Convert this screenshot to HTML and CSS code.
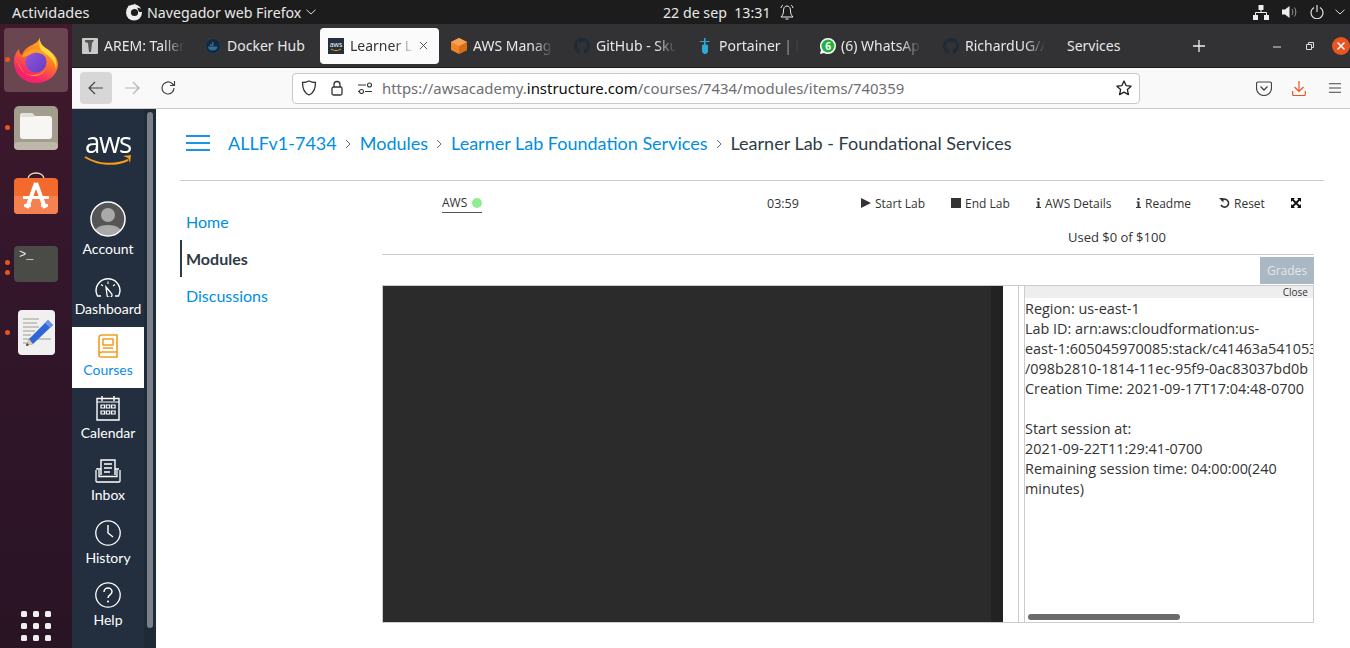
FILE: index.html
```html
<!DOCTYPE html>
<html lang="es">
<head>
<meta charset="utf-8">
<title>Learner Lab - Foundational Services</title>
<link rel="stylesheet" href="styles.css">
</head>
<body>
<header class="topbar">
  <span class="activities">Actividades</span>
  <svg class="top-fx" viewBox="0 0 18 18"><circle cx="9" cy="9.500" r="8" fill="#eee"/><circle cx="9.500" cy="9.500" r="3.600" fill="#1c1c1c"/><path d="M1.500 7 4 2 6 5l4-4.500 1.500 4L8 6 4.500 8z" fill="#eee"/><path d="M12 4.500 17 6v3h-3z" fill="#1c1c1c"/></svg>
  <span class="app-name">Navegador web Firefox</span>
  <svg class="chev" viewBox="0 0 10 6"><path d="M.5.8 5 5 9.500.8" fill="none" stroke="#ddd" stroke-width="1"/></svg>
  <span class="clock">22 de sep &nbsp;13:31</span>
  <svg class="bell" viewBox="0 0 14 16"><path d="M7 2C4.200 2 3.500 4.500 3.500 7c0 2.500-1 4.500-2.500 6h12c-1.500-1.500-2.500-3.500-2.500-6 0-2.500-.7-5-3.500-5zM5.500 15h3M1 4c.3-1.500 1-2.500 2-3M13 4c-.3-1.500-1-2.500-2-3" fill="none" stroke="#eee" stroke-width="1"/></svg>
  <div class="tray">
    <svg class="tray-net" viewBox="0 0 16 15"><path d="M5.500 0h5v5h-5zM0 10h5v5H0zM11 10h5v5h-5z" fill="#eee"/><path d="M8 5v2.500M2.500 10V7.500h11V10" fill="none" stroke="#eee"/></svg>
    <svg class="tray-vol" viewBox="0 0 15 14"><path d="M0 4.500h3L7.500 1v12L3 9.500H0z" fill="#eee"/><path d="M10 4c1 1.800 1 4.200 0 6M12.500 2.500c1.800 2.800 1.800 6.200 0 9" fill="none" stroke="#999"/></svg>
    <svg class="tray-pow" viewBox="0 0 14 14"><path d="M4 2.500a6 6 0 1 0 6 0M7 0v7" fill="none" stroke="#eee" stroke-width="1.100"/></svg>
    <svg class="chev tray-chev" viewBox="0 0 10 6"><path d="M.5.8 5 5 9.500.8" fill="none" stroke="#ddd" stroke-width="1"/></svg>
  </div>
</header>

<div class="desktop">
  <aside class="dock">
    <div class="dock-tile dock-firefox">
      <i class="run-dot"></i>
      <svg class="i-firefox" viewBox="0 0 44 46">
        <defs>
          <linearGradient id="fxa" x1="0.8" y1="0" x2="0.3" y2="1"><stop offset="0" stop-color="#ffc31f"/><stop offset=".45" stop-color="#ff7a25"/><stop offset=".85" stop-color="#f5226e"/></linearGradient>
          <linearGradient id="fxb" x1="0" y1="0" x2="1" y2="1"><stop offset="0" stop-color="#9a55d8"/><stop offset="1" stop-color="#5b3fc7"/></linearGradient>
        </defs>
        <path d="M26 0c-1 5 2 9 7 12 6 4 11 9 11 15 0 11-10 19-22 19C10 46 0 37 0 25c0-6 2-10 5-13 0 3 1 5 3 6 1-4 4-7 8-9 4-2 9-4 10-9z" fill="url(#fxa)"/>
        <path d="M26 0c-1 5 2 9 7 12 6 4 11 10 9 20-1-8-7-15-14-16-3-5-3-11-2-16z" fill="#ffd83b"/>
        <circle cx="22" cy="25" r="10.500" fill="url(#fxb)"/>
        <path d="M8 20c2-6 10-10 18-7 3 1 6 3 7 7-4-3-9-5-13-4-4 1-7 4-12 4z" fill="#ff9c24"/>
        <path d="M4 24c1 7 5 14 15 14 8 0 13-5 14-9-2 7-8 11-15 10C10 38 6 31 4 24z" fill="#ff9a2e"/>
      </svg>
    </div>
    <div class="dock-item dock-files">
      <i class="run-dot"></i>
      <svg class="i-files" viewBox="0 0 44 44"><rect width="44" height="44" rx="5" fill="#a39d8d"/><rect y="36" width="44" height="8" rx="4" fill="#bdb8aa"/><path d="M6 10a3 3 0 0 1 3-3h9l3 3h14a3 3 0 0 1 3 3v17a3 3 0 0 1-3 3H9a3 3 0 0 1-3-3z" fill="#f7f6f3"/><path d="M6 11h15l-3-4H9a3 3 0 0 0-3 3z" fill="#e2e0da"/></svg>
    </div>
    <div class="dock-item dock-store">
      <svg class="i-store" viewBox="0 0 44 44"><path d="M14 7c0-8 16-8 16 0" fill="none" stroke="#f3d9bd" stroke-width="1.500"/><rect y="6" width="44" height="36" rx="4" fill="#f26a2e"/><path d="M0 24h44v14a4 4 0 0 1-4 4H4a4 4 0 0 1-4-4z" fill="#f68150"/><path d="M22 11 13 36M22 11l9 25" stroke="#fff" stroke-width="4" fill="none"/><path d="M9 24h26v3H9zM10 32h7v3h-7zM27 32h7v3h-7z" fill="#fff"/></svg>
    </div>
    <div class="dock-item dock-term">
      <i class="run-dot dot-a"></i><i class="run-dot dot-b"></i>
      <div class="term-tile">&gt;_</div>
    </div>
    <div class="dock-item dock-edit">
      <i class="run-dot"></i>
      <svg class="i-edit" viewBox="0 0 37 45"><rect width="37" height="45" rx="4" fill="#f0f0f0"/><path d="M5 9h16M5 13h14M5 17h16M5 21h12M5 25h8M5 29h28M5 33h10" stroke="#bbb7ad" stroke-width="1.300"/><path d="m30 10 5 5-20 19-7 2 3-7z" fill="#2f66d8"/><path d="m30 10 5 5-3 3-5-5z" fill="#6c93e8"/><path d="m11 29 4 5-7 2z" fill="#e5c9a0"/><path d="m9 33 2 2-3 1z" fill="#333"/></svg>
    </div>
    <div class="apps-grid"><i></i><i></i><i></i><i></i><i></i><i></i><i></i><i></i><i></i></div>
  </aside>

  <section class="browser">
    <div class="tabbar">
      <div class="tab">
        <svg class="fav" viewBox="0 0 16 16"><rect width="16" height="16" rx="1" fill="#c9c9c9"/><path d="M3 2h9l-2 3-1 9H7L6 5 3 4z" fill="#555"/></svg>
        <span class="tab-title fade">AREM: Taller de</span>
      </div>
      <div class="tab">
        <svg class="fav" viewBox="0 0 16 16"><circle cx="8" cy="8" r="7.500" fill="#16293a" stroke="#1e3f5c"/><path d="M3 8.500h9.500c0 2.500-2 4-5 4-2.500 0-4.500-1.500-4.500-4zM5 6h1.500v2H5zM7 6h1.500v2H7zM7 4h1.500v2H7z" fill="#2f6d9e"/></svg>
        <span class="tab-title">Docker Hub</span>
      </div>
      <div class="tab tab-active">
        <svg class="fav" viewBox="0 0 16 16"><rect width="16" height="16" fill="#232f3e"/><path d="M3 11c3 2 7 2 10 0" stroke="#f90" fill="none"/><text x="8" y="9" font-size="7" fill="#fff" text-anchor="middle" font-family="Open Sans">aws</text></svg>
        <span class="tab-title fade-short">Learner Lab</span>
        <svg class="tab-x" viewBox="0 0 10 10"><path d="m1 1 8 8M9 1 1 9" stroke="#444" stroke-width="1"/></svg>
      </div>
      <div class="tab">
        <svg class="fav" viewBox="0 0 16 16"><path d="M8 0l8 4v8l-8 4-8-4V4z" fill="#ed8427"/><path d="M8 8l8-4v8l-8 4z" fill="#d96d17"/><path d="M0 4l8-4 8 4-8 4z" fill="#f7a154"/></svg>
        <span class="tab-title fade">AWS Management</span>
      </div>
      <div class="tab">
        <svg class="fav" viewBox="0 0 16 16"><path fill="#1f2a36" d="M8 0C3.580 0 0 3.580 0 8c0 3.540 2.290 6.530 5.470 7.590.4.070.55-.17.55-.38 0-.19-.01-.82-.01-1.490-2.010.37-2.530-.49-2.690-.94-.09-.23-.48-.94-.82-1.130-.28-.15-.68-.52-.01-.53.63-.01 1.080.58 1.230.82.72 1.210 1.870.87 2.330.66.07-.52.28-.87.51-1.070-1.780-.2-3.640-.89-3.640-3.950 0-.87.31-1.590.82-2.150-.08-.2-.36-1.020.08-2.120 0 0 .67-.21 2.200.82.64-.18 1.320-.27 2-.27.68 0 1.360.09 2 .27 1.530-1.040 2.200-.82 2.200-.82.44 1.100.16 1.920.08 2.120.51.56.82 1.270.82 2.150 0 3.070-1.870 3.750-3.650 3.950.29.25.54.73.54 1.480 0 1.070-.01 1.930-.01 2.200 0 .21.15.46.55.38A8.013 8.013 0 0 0 16 8c0-4.420-3.580-8-8-8z"/></svg>
        <span class="tab-title fade">GitHub - Skuller</span>
      </div>
      <div class="tab">
        <svg class="fav" viewBox="0 0 16 16"><path d="M7 0h1.500v3H13l-1 1H8.500v2.500H10V7h1v7l-2 2H7l-2-2V7h1v-.5h1V4H3.500l-1-1H7z" fill="#2ea9d6"/></svg>
        <span class="tab-title fade">Portainer | local</span>
      </div>
      <div class="tab">
        <svg class="fav" viewBox="0 0 16 16"><path d="M8 0a8 8 0 0 1 0 16c-1.500 0-3-.4-4-1l-4 1 1-4C.4 11 0 9.500 0 8a8 8 0 0 1 8-8z" fill="#fff"/><circle cx="8" cy="8" r="6.500" fill="#21b33e"/><text x="8" y="11.500" font-size="10" font-weight="700" fill="#fff" text-anchor="middle" font-family="Open Sans">6</text></svg>
        <span class="tab-title tab-wa fade">(6) WhatsApp</span>
      </div>
      <div class="tab">
        <svg class="fav" viewBox="0 0 16 16"><path fill="#1f2a36" d="M8 0C3.580 0 0 3.580 0 8c0 3.540 2.290 6.530 5.470 7.590.4.070.55-.17.55-.38 0-.19-.01-.82-.01-1.490-2.010.37-2.530-.49-2.690-.94-.09-.23-.48-.94-.82-1.130-.28-.15-.68-.52-.01-.53.63-.01 1.080.58 1.230.82.72 1.210 1.870.87 2.330.66.07-.52.28-.87.51-1.070-1.780-.2-3.640-.89-3.640-3.950 0-.87.31-1.590.82-2.150-.08-.2-.36-1.020.08-2.120 0 0 .67-.21 2.200.82.64-.18 1.320-.27 2-.27.68 0 1.360.09 2 .27 1.530-1.040 2.200-.82 2.200-.82.44 1.100.16 1.920.08 2.120.51.56.82 1.270.82 2.150 0 3.070-1.870 3.750-3.650 3.950.29.25.54.73.54 1.480 0 1.070-.01 1.930-.01 2.200 0 .21.15.46.55.38A8.013 8.013 0 0 0 16 8c0-4.420-3.580-8-8-8z"/></svg>
        <span class="tab-title fade">RichardUG/ARE</span>
      </div>
      <div class="tab tab-plain"><span class="tab-title">Services</span></div>
      <svg class="newtab" viewBox="0 0 12 12"><path d="M6 0v12M0 6h12" stroke="#eee" stroke-width="1.300"/></svg>
      <div class="winctl">
        <svg class="win-min" viewBox="0 0 8 2"><path d="M0 1h8" stroke="#ddd" stroke-width="1"/></svg>
        <svg class="win-max" viewBox="0 0 8 8"><path d="M.5 2.500h5v5h-5zM2.500 2V.5h5v5H6" fill="none" stroke="#ddd"/></svg>
        <svg class="win-close" viewBox="0 0 18 18"><circle cx="9" cy="9" r="9" fill="#e95420"/><path d="m5.500 5.500 7 7M12.500 5.500l-7 7" stroke="#fff" stroke-width="1.500"/></svg>
      </div>
    </div>

    <div class="navbar">
      <button class="nav-back"><svg viewBox="0 0 16 14"><path d="M15 7H1M7 1 1 7l6 6" fill="none" stroke="#444" stroke-width="1.200"/></svg></button>
      <svg class="nav-fwd" viewBox="0 0 16 14"><path d="M1 7h14M9 1l6 6-6 6" fill="none" stroke="#b5b5b5" stroke-width="1.200"/></svg>
      <svg class="nav-reload" viewBox="0 0 16 16"><path d="M14 8a6 6 0 1 1-2-4.500L14 5.500M14.500 1v4.500H10" fill="none" stroke="#444" stroke-width="1.200"/></svg>
      <div class="urlbar">
        <svg class="u-shield" viewBox="0 0 16 16"><path d="M8 1c2 1 4 1.500 6.500 1.500C14.500 9 13 13 8 15 3 13 1.500 9 1.500 2.500 4 2.500 6 2 8 1z" fill="none" stroke="#333" stroke-width="1.300"/></svg>
        <svg class="u-lock" viewBox="0 0 14 16"><path d="M4 7V4.500a3 3 0 0 1 6 0V7" fill="none" stroke="#333" stroke-width="1.300"/><rect x="2" y="7" width="10" height="8" rx="1.500" fill="none" stroke="#333" stroke-width="1.300"/></svg>
        <svg class="u-perm" viewBox="0 0 16 12"><path d="M1 3h8M1 9.500h1M8 9.500h7" stroke="#333" stroke-width="1.200"/><circle cx="12.500" cy="3" r="2" fill="none" stroke="#333" stroke-width="1.100"/><circle cx="4.500" cy="9.500" r="2" fill="none" stroke="#333" stroke-width="1.100"/></svg>
        <span class="url"><span class="url-dim">https://awsacademy.</span><span class="url-host">instructure.com</span><span class="url-dim">/courses/7434/modules/items/740359</span></span>
        <svg class="u-star" viewBox="0 0 16 16"><path d="m8 1 2.100 4.600 5 .6-3.700 3.400 1 5L8 12.100 3.600 14.600l1-5L.9 6.200l5-.6z" fill="none" stroke="#222" stroke-width="1.300" stroke-linejoin="round"/></svg>
      </div>
      <svg class="n-pocket" viewBox="0 0 16 15"><path d="M2 1h12a1.500 1.500 0 0 1 1.500 1.500V7a7.500 7.500 0 0 1-15 0V2.500A1.500 1.500 0 0 1 2 1z" fill="none" stroke="#444" stroke-width="1.200"/><path d="m4.500 5.500 3.500 3.500 3.500-3.500" fill="none" stroke="#444" stroke-width="1.300"/></svg>
      <svg class="n-dl" viewBox="0 0 14 15"><path d="M7 0v10M2.500 6 7 10.500 11.500 6M.7 10v3.500a1 1 0 0 0 1 1h10.600a1 1 0 0 0 1-1V10" fill="none" stroke="#e95420" stroke-width="1.200"/></svg>
      <svg class="n-menu" viewBox="0 0 12 10"><path d="M0 .7h12M0 5h12M0 9.300h12" stroke="#444" stroke-width="1.100"/></svg>
    </div>

    <div class="page">
      <nav class="lms-nav">
        <div class="lms-logo">
          <span class="lms-aws">aws</span>
          <svg class="lms-swoosh" viewBox="0 0 49 12"><path d="M1 2c13 8 30 9 43 3" fill="none" stroke="#f59b1d" stroke-width="2"/><path d="M39 1l8-1-1 8-2-5z" fill="#f59b1d"/></svg>
        </div>
        <a class="lms-item h-account">
          <svg class="ico-account" viewBox="0 0 36 36"><defs><clipPath id="acc"><circle cx="18" cy="18" r="16.500"/></clipPath></defs><circle cx="18" cy="18" r="16.500" fill="#555"/><g clip-path="url(#acc)"><circle cx="18" cy="14" r="7" fill="#a9a9a9"/><path d="M3 36c0-9 7-12 15-12s15 3 15 12z" fill="#a9a9a9"/></g><circle cx="18" cy="18" r="17" fill="none" stroke="#fff" stroke-width="1.500"/></svg>
          <span>Account</span>
        </a>
        <a class="lms-item h-dash">
          <svg class="ico-dash" viewBox="0 0 26 19"><path d="M6 18H2.500C1.500 16 1 14 1 12.800A12 12 0 0 1 25 12.800C25 14 24.500 16 23.500 18H20" fill="none" stroke="#fff" stroke-width="1.400"/><path d="M13 3.500v2.500M6 6.500l2 1.500M20 6.500l-2 1.500" stroke="#fff" stroke-width="1.100"/><path d="m11 9 5 6a2.500 2.500 0 1 1-4 2z" fill="none" stroke="#fff" stroke-width="1.300"/></svg>
          <span>Dashboard</span>
        </a>
        <a class="lms-item lms-active h-courses">
          <svg class="ico-courses" viewBox="0 0 20 24"><path d="M4 1h15v17H4a3 3 0 0 0-3 3V4a3 3 0 0 1 3-3zM1 21a2 2 0 0 0 2 2h16v-5" fill="none" stroke="#f59b1d" stroke-width="1.600"/><path d="M5 5h10v6H5z" fill="none" stroke="#f59b1d" stroke-width="1.500"/><path d="M5 14h10" stroke="#f59b1d" stroke-width="1.500"/></svg>
          <span>Courses</span>
        </a>
        <a class="lms-item h-cal">
          <svg class="ico-cal" viewBox="0 0 24 26"><path d="M1 3.500h22V25H1zM6 1v5M18 1v5" fill="none" stroke="#fff" stroke-width="1.400"/><path d="M1 7h22" stroke="#fff" stroke-width="1"/><path d="M5 10h3.500v3H5zM10.300 10h3.500v3h-3.500zM15.600 10h3.500v3h-3.500zM5 16h3.500v3H5zM10.300 16h3.500v3h-3.500zM15.600 16h3.500v3h-3.500z" fill="none" stroke="#fff" stroke-width="1.200"/></svg>
          <span>Calendar</span>
        </a>
        <a class="lms-item h-inbox">
          <svg class="ico-inbox" viewBox="0 0 26 24"><path d="M6 16V1h14v15" fill="none" stroke="#fff" stroke-width="1.400"/><path d="M9 5h8M9 9h8M9 13h6" stroke="#fff" stroke-width="1.300"/><path d="M6 10H2v-1M20 10h4M1 11v11a1 1 0 0 0 1 1h22a1 1 0 0 0 1-1V11M4 11v6.500h18V11" fill="none" stroke="#fff" stroke-width="1.300"/></svg>
          <span>Inbox</span>
        </a>
        <a class="lms-item h-hist">
          <svg class="ico-round" viewBox="0 0 26 26"><circle cx="13" cy="13" r="12.200" fill="none" stroke="#fff" stroke-width="1.300"/><path d="M13 5v8l5 4" fill="none" stroke="#fff" stroke-width="1.400"/></svg>
          <span>History</span>
        </a>
        <a class="lms-item h-help">
          <svg class="ico-round" viewBox="0 0 26 26"><circle cx="13" cy="13" r="12.200" fill="none" stroke="#fff" stroke-width="1.300"/><path d="M9 10c0-2.500 2-4 4-4s4 1.500 4 3.800c0 3-4 3.200-4 6.200" fill="none" stroke="#fff" stroke-width="1.500"/><circle cx="13" cy="19.500" r="1.100" fill="#fff"/></svg>
          <span>Help</span>
        </a>
      </nav>
      <div class="vscroll"><div class="vthumb"></div></div>

      <main class="content">
        <div class="crumbs">
          <div class="burger"><i></i><i></i><i></i></div>
          <a>ALLFv1-7434</a><svg class="sep" viewBox="0 0 6 10"><path d="m1 1 4 4-4 4" fill="none" stroke="#666"/></svg>
          <a>Modules</a><svg class="sep" viewBox="0 0 6 10"><path d="m1 1 4 4-4 4" fill="none" stroke="#666"/></svg>
          <a>Learner Lab Foundation Services</a><svg class="sep" viewBox="0 0 6 10"><path d="m1 1 4 4-4 4" fill="none" stroke="#666"/></svg>
          <span class="crumb-current">Learner Lab - Foundational Services</span>
        </div>
        <div class="course">
          <ul class="course-nav">
            <li>Home</li>
            <li class="course-active">Modules</li>
            <li>Discussions</li>
          </ul>
          <div class="lab">
            <div class="lab-tools">
              <span class="lab-aws">AWS <i class="led"></i></span>
              <span class="lab-time">03:59</span>
              <span class="tool"><svg class="t-play" viewBox="0 0 10 10"><path d="M0 0l10 5-10 5z" fill="#333"/></svg>Start Lab</span>
              <span class="tool"><i class="t-stop"></i>End Lab</span>
              <span class="tool"><svg class="t-info" viewBox="0 0 5 10"><path d="M1.500 0h2v2h-2zM.5 3.500h3V9H5v1H0V9h1.500V4.500H.5z" fill="#333"/></svg>AWS Details</span>
              <span class="tool"><svg class="t-info" viewBox="0 0 5 10"><path d="M1.500 0h2v2h-2zM.5 3.500h3V9H5v1H0V9h1.500V4.500H.5z" fill="#333"/></svg>Readme</span>
              <span class="tool"><svg class="t-reset" viewBox="0 0 11 10"><path d="M2.500 2.500A4 4 0 1 1 2 7" fill="none" stroke="#333" stroke-width="1.600"/><path d="M0 0h4.500v4.500z" fill="#333"/></svg>Reset</span>
              <svg class="t-expand" viewBox="0 0 10 10"><path d="M0 0h4L0 4zM10 0v4L6 0zM0 10V6l4 4zM10 10H6l4-4z" fill="#111"/><path d="m1.500 1.500 7 7M8.500 1.500l-7 7" stroke="#111" stroke-width="1.800"/></svg>
            </div>
            <div class="lab-used">Used $0 of $100</div>
            <div class="lab-grades"><span class="grades-btn">Grades</span></div>
            <div class="lab-box">
              <div class="term"><div class="term-scroll"></div></div>
              <div class="gutter"></div>
              <div class="panel">
                <div class="panel-head">Close</div>
                <div class="panel-body">Region: us-east-1<br>Lab ID: arn:aws:cloudformation:us-<br>east-1:605045970085:stack/c41463a541053<br>/098b2810-1814-11ec-95f9-0ac83037bd0b<br>Creation Time: 2021-09-17T17:04:48-0700<br><br>Start session at:<br>2021-09-22T11:29:41-0700<br>Remaining session time: 04:00:00(240<br>minutes)</div>
                <div class="panel-hbar"></div>
              </div>
            </div>
          </div>
        </div>
      </main>
    </div>
  </section>
</div>
</body>
</html>
```
FILE: styles.css
```css
* { box-sizing: border-box; }
html, body { margin: 0; height: 648px; overflow: hidden; background: #fff; }
body { display: flex; flex-direction: column; width: 1350px; font-family: "Noto Sans", sans-serif; }
svg { display: block; flex: none; }
i { display: block; }

/* top bar */
.topbar { height: 24px; flex: none; background: #1c1c1c; color: #e8e8e8; display: flex; align-items: center; font-size: 14px; }
.activities { margin-left: 12px; width: 113px; font-size: 14.500px; }
.top-fx { width: 18px; height: 18px; }
.app-name { margin-left: 4px; width: 155px; white-space: nowrap; font-size: 14.200px; }
.chev { width: 10px; height: 6px; margin-left: 4px; }
.clock { margin-left: 347px; width: 117px; white-space: nowrap; font-size: 14.200px; }
.bell { width: 14px; height: 16px; }
.tray { margin-left: auto; display: flex; align-items: center; padding-right: 5px; }
.tray-net { width: 16px; height: 15px; }
.tray-vol { width: 15px; height: 14px; margin-left: 13px; }
.tray-pow { width: 14px; height: 14px; margin-left: 13px; }
.tray-chev { margin-left: 11px; }

.desktop { flex: 1; display: flex; min-height: 0; }

/* dock */
.dock { width: 72px; flex: none; position: relative; background: linear-gradient(180deg, #41192c 0%, #33162a 40%, #291424 100%); padding-top: 4px; display: flex; flex-direction: column; align-items: center; }
.dock-tile { width: 64px; height: 64px; border-radius: 4px; background: #6a4650; display: flex; justify-content: center; align-items: center; position: relative; }
.i-firefox { width: 44px; height: 46px; }
.dock-item { position: relative; width: 72px; display: flex; justify-content: center; }
.run-dot { position: absolute; width: 5px; height: 5px; border-radius: 50%; background: #e95420; left: 5px; top: 50%; margin-top: -3px; }
.dock-tile .run-dot { left: 1px; }
.dock-files { margin-top: 14px; }
.i-files { width: 44px; height: 44px; }
.dock-store { margin-top: 22px; }
.i-store { width: 44px; height: 44px; }
.dock-term { margin-top: 30px; }
.dot-a { top: 14px; margin-top: 0; }
.dot-b { top: 24px; margin-top: 0; }
.term-tile { width: 44px; height: 36px; background: #4a4a47; border-radius: 4px; color: #eee; font: 12px/14px "Liberation Mono", monospace; padding: 2px 5px; }
.dock-edit { margin-top: 28px; }
.i-edit { width: 37px; height: 45px; }
.apps-grid { position: absolute; left: 21px; bottom: 7px; display: grid; grid-template-columns: repeat(3, 6px); gap: 6px; }
.apps-grid i { width: 6px; height: 6px; border-radius: 1.500px; background: #efefef; }

/* browser */
.browser { flex: 1; min-width: 0; display: flex; flex-direction: column; }
.tabbar { height: 44px; flex: none; background: #323234; display: flex; align-items: center; padding-left: 2px; border-bottom: 1px solid #1a1a1a; }
.tab { width: 119px; height: 36px; margin-right: 4px; padding-left: 8px; display: flex; align-items: center; flex: none; color: #e8e8e8; font-size: 14px; border-radius: 4px; position: relative; }
.fav { width: 16px; height: 16px; margin-right: 6px; }
.tab-title { display: block; width: 80px; overflow: hidden; white-space: nowrap; }
.fade { -webkit-mask-image: linear-gradient(90deg, #000 75%, transparent 100%); mask-image: linear-gradient(90deg, #000 75%, transparent 100%); }
.fade-short { width: 64px; -webkit-mask-image: linear-gradient(90deg, #000 70%, transparent 100%); mask-image: linear-gradient(90deg, #000 70%, transparent 100%); }
.tab-wa { margin-left: -1px; }
.tab-active { background: #fbfbfb; color: #333; }
.tab-x { width: 9px; height: 9px; margin-left: 5px; }
.tab-plain { padding-left: 9px; width: 80px; margin-right: 0; }
.newtab { width: 12px; height: 12px; margin-left: 55px; }
.winctl { margin-left: auto; display: flex; align-items: center; }
.win-min { width: 8px; height: 2px; margin-top: 3px; }
.win-max { width: 8px; height: 8px; margin-left: 25px; }
.win-close { width: 18px; height: 18px; margin-left: 18px; }

/* navbar */
.navbar { height: 41px; flex: none; background: #f9f9fa; border-bottom: 1px solid #ccc; display: flex; align-items: center; padding-left: 8px; }
.nav-back { width: 32px; height: 32px; border: 0; padding: 0 0 0 8px; background: #d7d7d8; border-radius: 4px; }
.nav-back svg { width: 16px; height: 14px; }
.nav-fwd { width: 16px; height: 14px; margin-left: 12px; }
.nav-reload { width: 16px; height: 16px; margin-left: 20px; }
.urlbar { width: 848px; height: 31px; margin-left: 116px; background: #fff; border: 1px solid #c8c8c8; border-radius: 4px; display: flex; align-items: center; padding-left: 8px; }
.u-shield { width: 16px; height: 16px; }
.u-lock { width: 14px; height: 16px; margin-left: 13px; }
.u-perm { width: 16px; height: 12px; margin-left: 13px; }
.url { margin-left: 9px; font-size: 14.900px; white-space: nowrap; }
.url-dim { color: #6e6e72; }
.url-host { color: #0c0c0d; }
.u-star { width: 16px; height: 16px; margin-left: auto; margin-right: 7px; }
.n-pocket { width: 16px; height: 15px; margin-left: 116px; }
.n-dl { width: 14px; height: 15px; margin-left: 20px; }
.n-menu { width: 12px; height: 10px; margin-left: 23px; }

/* page */
.page { flex: 1; min-height: 0; display: flex; background: #fff; }
.lms-nav { width: 72px; flex: none; background: #232f3e; display: flex; flex-direction: column; font-family: Lato, sans-serif; }
.lms-logo { height: 92px; display: flex; flex-direction: column; align-items: center; padding-top: 21px; }
.lms-aws { color: #fff; font: 500 30px/24px "Open Sans", sans-serif; letter-spacing: -1.500px; transform: scaleX(0.92); }
.lms-swoosh { width: 49px; height: 12px; margin-top: 1px; }
.lms-item { display: flex; flex-direction: column; align-items: center; justify-content: flex-end; color: #fff; font-size: 14px; line-height: 20px; padding-bottom: 8px; gap: 2px; }
.h-account { height: 66px; }
.h-dash { height: 60px; }
.h-courses { height: 61px; }
.h-cal { height: 63px; }
.h-inbox { height: 62px; }
.h-hist { height: 63px; }
.h-help { height: 62px; }
.lms-active { background: #fff; color: #0a8ce8; }
.ico-account { width: 36px; height: 36px; }
.ico-dash { width: 26px; height: 19px; }
.ico-courses { width: 20px; height: 24px; }
.ico-cal { width: 24px; height: 26px; }
.ico-inbox { width: 26px; height: 24px; }
.ico-round { width: 26px; height: 26px; }
.vscroll { width: 12px; flex: none; background: #1f2a37; padding: 3px 3px 0; }
.vthumb { width: 6px; height: 516px; background: #7b8089; border-radius: 3px; }

.content { flex: 1; min-width: 0; padding: 0 26px 0 24px; font-family: Lato, sans-serif; }
.crumbs { height: 72px; border-bottom: 1px solid #c7cdd1; display: flex; align-items: center; padding: 0 0 4px 6px; font-size: 18px; color: #008ee2; white-space: nowrap; }
.burger { width: 24px; margin-right: 18px; display: flex; flex-direction: column; gap: 5px; }
.burger i { height: 2px; background: #1a96e6; }
.sep { width: 6px; height: 10px; margin: 2px 9px 0 8px; }
.crumb-current { color: #2d3b45; }
.course { display: flex; }
.course-nav { list-style: none; width: 202px; flex: none; margin: 0; padding: 22px 0 0; font-size: 16px; color: #008ee2; }
.course-nav li { height: 37px; line-height: 37px; padding-left: 6px; }
.course-active { color: #2d3b45; font-weight: 700; border-left: 2px solid #2d3b45; padding-left: 4px !important; }

.lab { flex: 1; min-width: 0; margin-right: 10px; font-family: "Open Sans", sans-serif; font-size: 12px; color: #333; }
.lab-tools { height: 44px; display: grid; grid-template-columns: 60px 325px 94px 90px 85px 100px 83px 72px auto; align-items: center; }
.lab-aws { grid-column: 2; justify-self: start; display: flex; align-items: center; gap: 5px; border-bottom: 1px solid #555; line-height: 18px; margin-top: 1px; }
.led { width: 10px; height: 10px; border-radius: 50%; background: #90ee90; }
.lab-time { font-size: 12.500px; }
.tool { display: flex; align-items: center; white-space: nowrap; }
.t-play { width: 10px; height: 10px; margin-right: 4px; }
.t-stop { width: 10px; height: 10px; background: #333; margin-right: 4px; }
.t-info { width: 5px; height: 10px; margin-right: 4px; }
.t-reset { width: 11px; height: 10px; margin-right: 4px; }
.t-expand { width: 10px; height: 10px; }
.lab-used { height: 30px; padding-left: 686px; border-bottom: 1px solid #ccc; line-height: 24px; font-size: 13px; }
.lab-grades { height: 30px; display: flex; justify-content: flex-end; padding-top: 2px; }
.grades-btn { width: 54px; height: 27px; background: #a9b8c3; color: #e6e6e6; text-align: center; line-height: 28px; }
.lab-box { height: 338px; border: 1px solid #ccc; display: flex; }
.term { width: 620px; background: #2b2b2b; display: flex; justify-content: flex-end; }
.term-scroll { width: 12px; background: #222; }
.gutter { width: 21px; background: linear-gradient(#ccc, #ccc) 15px 0 / 1px 100% no-repeat; }
.panel { flex: 1; min-width: 0; border-left: 1px solid #ccc; position: relative; overflow: hidden; }
.panel-head { height: 12px; background: #eee; font-size: 10px; line-height: 13px; text-align: right; padding-right: 5px; }
.panel-body { font-size: 14.400px; line-height: 20px; white-space: nowrap; padding-top: 1px; }
.panel-hbar { position: absolute; left: 3px; bottom: 2px; width: 152px; height: 6px; border-radius: 3px; background: #6b6b6b; }
```
